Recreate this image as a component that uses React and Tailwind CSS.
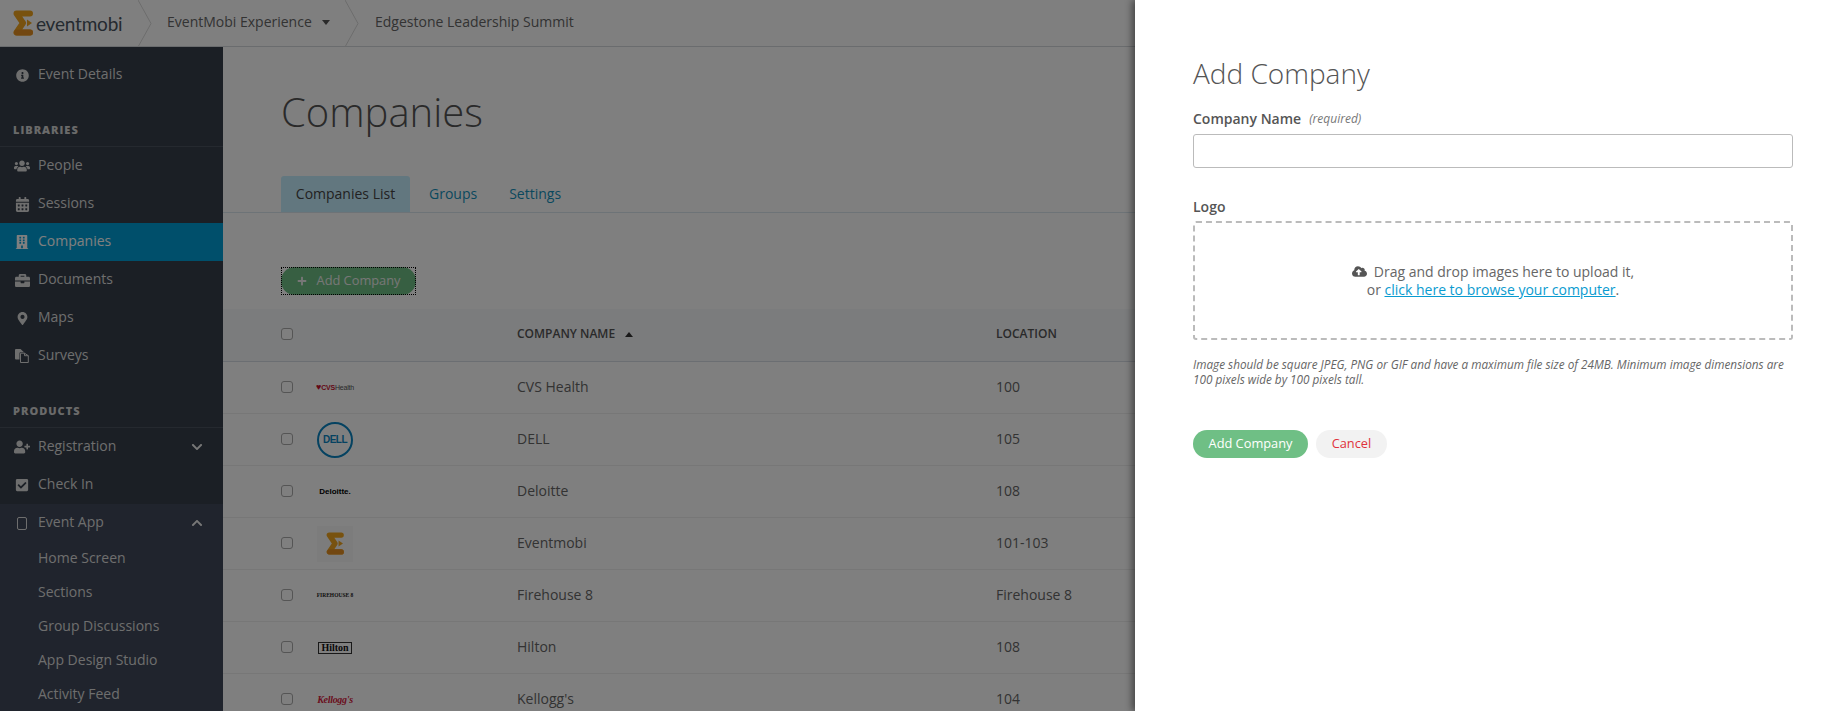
import React from "react";
import {
  FaInfoCircle,
  FaUsers,
  FaCalendarAlt,
  FaBuilding,
  FaBriefcase,
  FaMapMarkerAlt,
  FaUserPlus,
  FaCheckSquare,
  FaChevronDown,
  FaChevronUp,
  FaPlus,
  FaCloudUploadAlt,
} from "react-icons/fa";

function SigmaLogo({ className }) {
  return (
    <svg viewBox="0 0 20 26" className={className}>
      <path
        d="M17 3.500H3.500L10 13 3.500 22.500H17"
        fill="none"
        stroke="#f0a51e"
        strokeWidth="6"
        strokeLinecap="round"
        strokeLinejoin="round"
      />
      <path d="M4 22.500H17" fill="none" stroke="#e58f22" strokeWidth="6" strokeLinecap="round" />
      <path fill="#f0a51e" d="M14 9.500l5 3.500-5 3.500z" />
    </svg>
  );
}

function FilesIcon() {
  return (
    <svg viewBox="0 0 14 14" className="h-[14px] w-[14px]">
      <path fill="currentColor" d="M0 1a1 1 0 0 1 1-1h4.500L9 3.200H5.500a1 1 0 0 0-1 1V10.500H1a1 1 0 0 1-1-1z" />
      <path fill="none" stroke="currentColor" d="M5.500 4.200h4v2.500h3.800v6.800H5.500zM9.500 4.200l3.800 2.500" />
    </svg>
  );
}

function Chevron() {
  return (
    <svg viewBox="0 0 14 47" className="h-[47px] w-[14px] shrink-0">
      <path d="M0 0l13 23.500L0 47" fill="none" stroke="#d9d9d9" strokeWidth="1" />
    </svg>
  );
}

function TopBar() {
  return (
    <div className="flex h-[47px] shrink-0 items-center border-b border-[#d4d8dc] bg-white">
      <div className="flex w-[138px] items-center pl-[13px]">
        <SigmaLogo className="h-[26px] w-[20px]" />
        <span className="ml-[3px] font-['Lato',sans-serif] text-[19px] leading-none tracking-[-0.2px] text-[#4a5560]">
          eventmobi
        </span>
      </div>
      <Chevron />
      <div className="flex w-[193px] items-center pb-[4px] pl-[15px] text-[14px] text-[#666]">
        EventMobi Experience
        <span className="ml-[10px] mt-[2px] border-x-[4px] border-t-[5px] border-x-transparent border-t-[#555]"></span>
      </div>
      <Chevron />
      <div className="pb-[3px] pl-[16px] text-[14px] text-[#666]">Edgestone Leadership Summit</div>
    </div>
  );
}

const libraryItems = [
  { label: "People", icon: <FaUsers size={16} /> },
  { label: "Sessions", icon: <FaCalendarAlt size={15} /> },
  { label: "Companies", icon: <FaBuilding size={14} />, active: true },
  { label: "Documents", icon: <FaBriefcase size={15} /> },
  { label: "Maps", icon: <FaMapMarkerAlt size={13} /> },
  { label: "Surveys", icon: <FilesIcon /> },
];

const appItems = ["Home Screen", "Sections", "Group Discussions", "App Design Studio", "Activity Feed"];

function NavItem({ label, icon, active, arrow }) {
  return (
    <div className={`flex h-[38px] items-center text-[14px] ${active ? "bg-[#009fd6] text-white" : "text-[#dcdcdc]"}`}>
      <span className="flex w-[38px] shrink-0 justify-center pl-[6px]">{icon}</span>
      <span className="flex-1 pb-[3px]">{label}</span>
      {arrow && <span className="mr-[20px] text-[#eee]">{arrow}</span>}
    </div>
  );
}

function SectionHeading({ children }) {
  return (
    <div className="flex h-[53px] items-end border-b border-[#4a525e] pb-[8px] pl-[13px] text-[11px] font-extrabold tracking-[1px] text-[#d4d4d4]">
      {children}
    </div>
  );
}

function Sidebar() {
  return (
    <div className="w-[223px] shrink-0 bg-[#373f4b] pt-[9px]">
      <NavItem label="Event Details" icon={<FaInfoCircle size={13} />} />
      <SectionHeading>LIBRARIES</SectionHeading>
      {libraryItems.map((item) => (
        <NavItem key={item.label} {...item} />
      ))}
      <SectionHeading>PRODUCTS</SectionHeading>
      <NavItem label="Registration" icon={<FaUserPlus size={16} />} arrow={<FaChevronDown size={12} />} />
      <NavItem label="Check In" icon={<FaCheckSquare size={14} />} />
      <div className="bg-[#41495a]">
        <NavItem
          label="Event App"
          icon={<span className="block h-[13px] w-[10px] rounded-[2px] border-[1.5px] border-[#dcdcdc]"></span>}
          arrow={<FaChevronUp size={12} />}
        />
        {appItems.map((name) => (
          <div key={name} className="flex h-[34px] items-center pb-[4px] pl-[38px] text-[14px] text-[#dcdcdc]">
            {name}
          </div>
        ))}
      </div>
    </div>
  );
}

const rows = [
  {
    name: "CVS Health",
    location: "100",
    logo: (
      <span className="flex items-center font-['Liberation_Sans',sans-serif] text-[7px] font-bold leading-none tracking-[-0.2px] text-[#c8102e]">
        <span className="text-[9px]">♥</span>CVS<span className="font-normal text-[#555]">Health</span>
      </span>
    ),
  },
  {
    name: "DELL",
    location: "105",
    logo: (
      <span className="flex h-[36px] w-[36px] items-center justify-center rounded-full border-2 border-[#0a85c2] font-['Liberation_Sans',sans-serif] text-[10px] font-bold tracking-[-0.5px] text-[#0a85c2]">
        DELL
      </span>
    ),
  },
  {
    name: "Deloitte",
    location: "108",
    logo: <span className="font-['Liberation_Sans',sans-serif] text-[8px] font-bold leading-none text-black">Deloitte.</span>,
  },
  {
    name: "Eventmobi",
    location: "101-103",
    logo: (
      <span className="flex h-[36px] w-[36px] items-center justify-center bg-[#f8f8f8]">
        <SigmaLogo className="h-[23px] w-[18px]" />
      </span>
    ),
  },
  {
    name: "Firehouse 8",
    location: "Firehouse 8",
    logo: <span className="font-['Liberation_Serif',serif] text-[5.500px] font-bold leading-none text-[#222]">FIREHOUSE 8</span>,
  },
  {
    name: "Hilton",
    location: "108",
    logo: (
      <span className="border-[1.5px] border-[#333] px-[2px] font-['Liberation_Serif',serif] text-[10px] font-bold leading-[10px] text-[#111]">
        Hilton
      </span>
    ),
  },
  {
    name: "Kellogg's",
    location: "104",
    logo: (
      <span className="font-['Liberation_Serif',serif] text-[10px] font-bold italic leading-none tracking-[-0.3px] text-[#d5213c]">
        Kellogg's
      </span>
    ),
  },
];

function Checkbox() {
  return <span className="mb-[2px] block h-[12px] w-[12px] rounded-[3px] border border-[#aaa] bg-white"></span>;
}

function CompaniesPage() {
  return (
    <div className="min-w-0 flex-1 overflow-hidden bg-white">
      <div className="pl-[58px]">
        <h1 className="pt-[37px] text-[40px] font-light leading-[56px] text-[#555]">Companies</h1>
        <div className="mt-[36px] flex text-[14px]">
          <div className="flex h-[36px] w-[129px] items-center justify-center rounded-t-[3px] bg-[#c5eefe] pb-[2px] text-[#444]">
            Companies List
          </div>
          <div className="ml-[19px] flex items-center pb-[2px] text-[#1592bd]">Groups</div>
          <div className="ml-[32px] flex items-center pb-[2px] text-[#1592bd]">Settings</div>
        </div>
      </div>
      <div className="border-t border-[#dbe6ee]"></div>
      <div className="pl-[58px] pt-[54px]">
        <div className="w-[135px] outline-1 -outline-offset-1 outline-dotted outline-black">
          <button className="flex h-[28px] w-full items-center justify-center gap-[10px] rounded-full bg-[#6fbf85] text-[12.800px] text-[#eee]">
            <FaPlus size={10} />
            <span className="pb-[1px]">Add Company</span>
          </button>
        </div>
      </div>
      <div className="mt-[14px] flex h-[53px] items-center border-b border-[#d7dde5] bg-[#f6f8fb] pl-[58px] text-[12px] font-semibold text-[#555]">
        <span className="w-[36px]">
          <Checkbox />
        </span>
        <span className="ml-[200px] flex w-[479px] items-center pb-[2px]">
          COMPANY NAME
          <span className="ml-[10px] border-x-[4px] border-b-[5px] border-x-transparent border-b-[#333]"></span>
        </span>
        <span className="pb-[2px]">LOCATION</span>
      </div>
      {rows.map((row) => (
        <div key={row.name} className="flex h-[52px] items-center border-b border-[#eeeeee] pl-[58px] text-[14px] text-[#666]">
          <span className="w-[36px]">
            <Checkbox />
          </span>
          <span className="flex w-[200px] items-center">
            <span className="flex w-[36px] justify-center whitespace-nowrap">{row.logo}</span>
          </span>
          <span className="w-[479px] pb-[2px]">{row.name}</span>
          <span className="pb-[2px]">{row.location}</span>
        </div>
      ))}
    </div>
  );
}

function AddCompanyPanel() {
  return (
    <div className="absolute inset-y-0 right-0 w-[713px] bg-white pl-[58px] pr-[55px] shadow-[-3px_0_7px_rgba(0,0,0,0.45)]">
      <h2 className="pt-[51px] text-[28px] font-light leading-[44px] text-[#555]">Add Company</h2>
      <div className="mt-[14px] flex h-[20px] items-center pb-[1px] text-[14px] font-semibold text-[#555]">
        Company Name
        <span className="ml-[8px] text-[12px] font-normal italic text-[#777]">(required)</span>
      </div>
      <input className="mt-[5px] block h-[34px] w-full rounded-[3px] border border-[#bbb] bg-white" />
      <div className="mt-[28px] flex h-[20px] items-center text-[14px] font-semibold text-[#555]">Logo</div>
      <div className="mt-[5px] flex h-[119px] flex-col items-center justify-center rounded-[3px] border-2 border-dashed border-[#bbb] text-[14px] leading-[18px] text-[#666]">
        <div className="flex items-center">
          <FaCloudUploadAlt size={15} className="mr-[7px] text-[#555]" />
          Drag and drop images here to upload it,
        </div>
        <div>
          or <a className="text-[#0a9bd0] underline">click here to browse your computer</a>.
        </div>
      </div>
      <p className="mt-[17px] text-[11.750px] italic leading-[15px] text-[#666]">
        Image should be square JPEG, PNG or GIF and have a maximum file size of 24MB. Minimum image dimensions are 100 pixels wide by 100 pixels tall.
      </p>
      <div className="mt-[43px] flex gap-[8px] text-[12.800px]">
        <button className="h-[28px] w-[115px] rounded-full bg-[#6fbf85] text-white">Add Company</button>
        <button className="h-[28px] w-[71px] rounded-full bg-[#f2f2f2] text-[#e0323c]">Cancel</button>
      </div>
    </div>
  );
}

export default function App() {
  return (
    <div className="relative flex h-screen flex-col overflow-hidden font-['Open_Sans',sans-serif]">
      <TopBar />
      <div className="flex min-h-0 flex-1">
        <Sidebar />
        <CompaniesPage />
      </div>
      <div className="absolute inset-0 bg-black/50"></div>
      <AddCompanyPanel />
    </div>
  );
}
